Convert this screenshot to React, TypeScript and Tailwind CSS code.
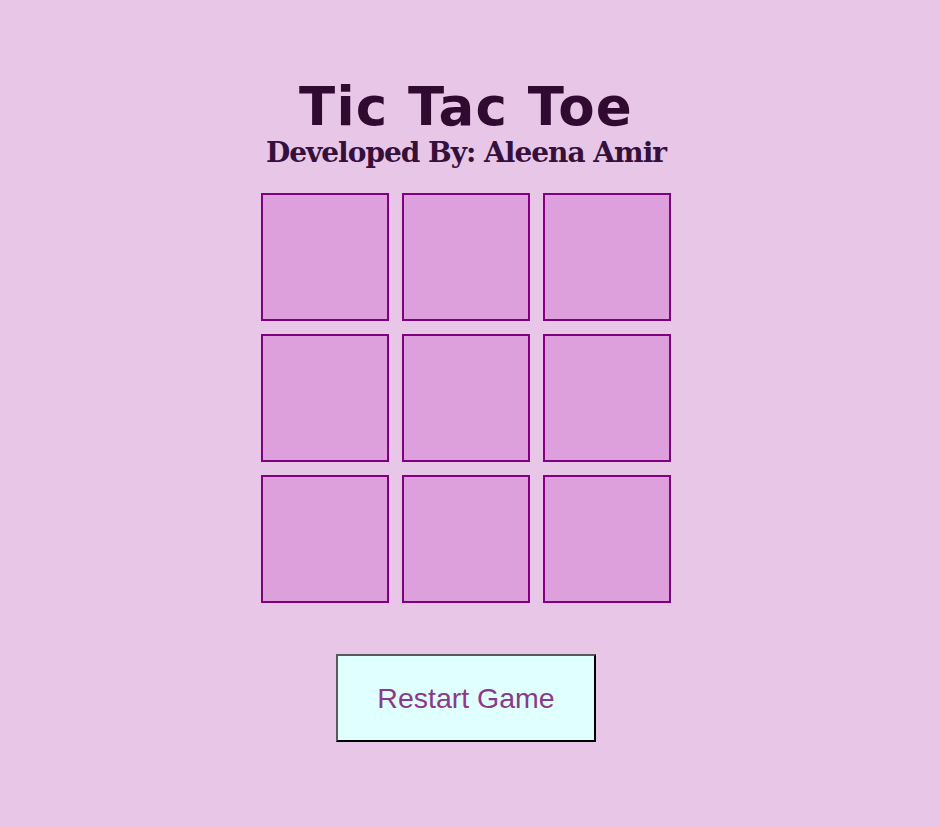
export default function App() {
  const cells = Array.from({ length: 9 });
  return (
    <div className="min-h-[827px] w-full bg-[#e8c6e8] flex flex-col items-center pt-[77px] pr-[8px]">
      <h1
        className="text-[53px] leading-[60px] font-bold text-[#300a30] tracking-[1.2px]"
        style={{ fontFamily: '"DejaVu Sans", Verdana, sans-serif' }}
      >
        Tic Tac Toe
      </h1>
      <h2
        className="text-[28px] leading-[32px] font-bold text-[#34103a] mt-0 tracking-[-1px]"
        style={{ fontFamily: '"DejaVu Serif", Georgia, serif' }}
      >
        Developed By: Aleena Amir
      </h2>
      <div className="grid grid-cols-[128px_128px_128px] gap-[13px] mt-[24px]">
        {cells.map((_, i) => (
          <div key={i} className="w-[128px] h-[128px] bg-[#dda0dd] border-2 border-[#800080]" />
        ))}
      </div>
      <button
        className="mt-[51px] w-[260px] h-[88px] bg-[#e0ffff] border-2 border-t-[#5a5a5a] border-l-[#5a5a5a] border-r-black border-b-black text-[28.5px] text-[#8b3a8b]"
        style={{ fontFamily: '"Liberation Sans", Arial, sans-serif' }}
      >
        Restart Game
      </button>
    </div>
  );
}
